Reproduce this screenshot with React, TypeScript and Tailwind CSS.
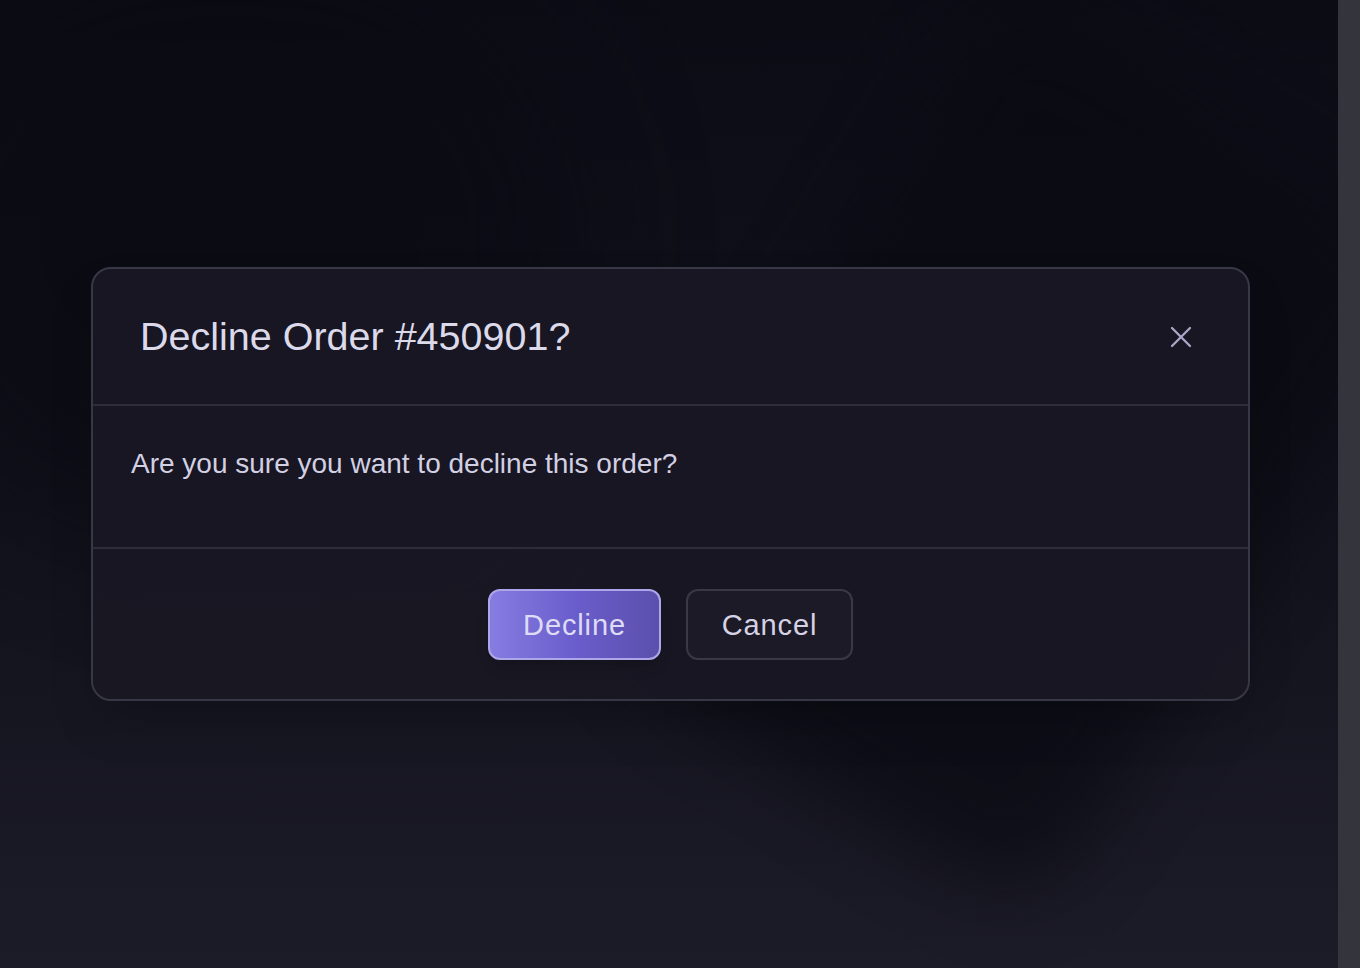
import { X } from 'lucide-react';

export default function App() {
  return (
    <div
      className="relative flex h-[968px] w-[1360px] overflow-hidden bg-gradient-to-b from-[#0c0c15] via-[#11111b] to-[#1c1b28]"
      style={{ fontFamily: '"Liberation Sans", Arial, sans-serif' }}
    >
      {/* background decoration */}
      <div className="pointer-events-none absolute left-[760px] top-[60px] h-[780px] w-[520px] rotate-[32deg] rounded-[90px] bg-[#0a0a12] opacity-70 blur-2xl" />
      <div className="pointer-events-none absolute left-[-120px] top-[-60px] h-[600px] w-[700px] rounded-full bg-[#0a0a12] opacity-60 blur-3xl" />

      <main className="relative flex flex-1 items-start pl-[91px] pt-[267px]">
        <div className="w-[1159px] overflow-hidden rounded-[20px] border-2 border-[#383746] bg-[#181723]/95 shadow-2xl">
          <header className="flex h-[137px] items-center justify-between border-b-2 border-[#2d2c3a] pl-[47px] pr-[49px]">
            <h2 className="text-[39.5px] text-[#dcdaea]">Decline Order #450901?</h2>
            <button className="text-[#aaa6c8]">
              <X size={36} strokeWidth={1.5} />
            </button>
          </header>

          <section className="h-[143px] border-b-2 border-[#2d2c3a] pl-[38px] pt-[37px]">
            <p className="text-[28px] text-[#d2d0e2]">Are you sure you want to decline this order?</p>
          </section>

          <footer className="flex items-center justify-center gap-[25px] pt-[40px] pb-[39px]">
            <button className="h-[71px] w-[173px] rounded-[12px] border-2 border-[#aea6ea] bg-gradient-to-r from-[#877ce0] via-[#6a5dcc] to-[#5b50ac] pt-[2px] text-[29px] tracking-[0.03em] text-[#dedcf4] shadow-lg">
              Decline
            </button>
            <button className="h-[71px] w-[167px] rounded-[12px] border-2 border-[#393847] bg-[#1b1a26] pt-[2px] text-[29px] tracking-[0.03em] text-[#d4d2e4]">
              Cancel
            </button>
          </footer>
        </div>
      </main>

      <aside className="relative h-full w-[22px] shrink-0 bg-[#33343c]" />
    </div>
  );
}
